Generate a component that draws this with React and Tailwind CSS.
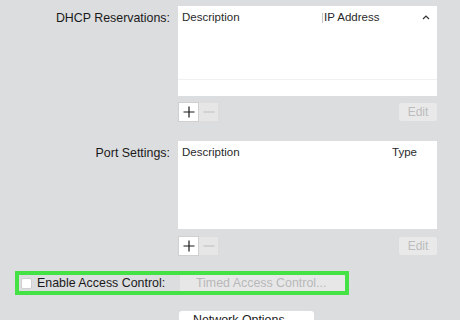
export default function App() {
  const font = { fontFamily: '"Liberation Sans", Arial, sans-serif' };
  const PlusMinus = () => (
    <div className="flex h-[20px]">
      <div className="w-[21px] h-[20px] bg-white border border-[#d0d0d0] flex items-center justify-center">
        <svg width="12" height="12" viewBox="0 0 12 12"><path d="M6 0.5V11.5M0.5 6H11.5" stroke="#1a1a1a" strokeWidth="1.2" /></svg>
      </div>
      <div className="w-[20px] h-[20px] bg-[#e6e6e7] border border-[#dcdcdc] border-l-0 flex items-center justify-center">
        <svg width="12" height="12" viewBox="0 0 12 12"><path d="M0.5 6H11.5" stroke="#c4c4c4" strokeWidth="1.2" /></svg>
      </div>
    </div>
  );
  const Edit = () => (
    <div className="w-[38px] h-[18px] bg-[#e9e9ea] rounded-[2px] text-[12px] text-[#bcbcbc] flex items-center justify-center">Edit</div>
  );
  return (
    <div className="w-[460px] h-[320px] overflow-hidden bg-[#dcdddf] text-[#1a1a1a] relative" style={font}>
      <div className="flex flex-col pt-[6px]">
        {/* DHCP */}
        <div className="flex">
          <div className="w-[170px] text-right text-[12.4px] pt-[4px] leading-[16px]">DHCP Reservations:</div>
          <div className="ml-[8px] w-[259px] h-[90px] bg-white flex flex-col">
            <div className="flex items-center h-[22px] pt-[2px] text-[11.5px] text-[#2a2a2a]">
              <span className="pl-[4px] w-[144px]">Description</span>
              <span className="w-[1px] h-[10px] bg-[#c8c8c8] mr-[1px]"></span>
              <span className="flex-1">IP Address</span>
              <svg width="8" height="6" viewBox="0 0 8 6" className="mr-[7px] mb-[2px]"><path d="M1 5L4 2L7 5" fill="none" stroke="#333" strokeWidth="1.2" /></svg>
            </div>
            <div className="flex-1"></div>
            <div className="h-[1px] bg-[#f0f0f0] mb-[16px]"></div>
          </div>
        </div>
        <div className="flex mt-[6px] pl-[178px] w-[437px] justify-between items-center">
          <PlusMinus />
          <Edit />
        </div>
        {/* Port settings */}
        <div className="flex mt-[19px]">
          <div className="w-[170px] text-right text-[12.4px] pt-[4px] leading-[16px]">Port Settings:</div>
          <div className="ml-[8px] w-[259px] h-[88px] bg-white flex flex-col">
            <div className="flex items-center h-[22px] pt-[2px] text-[11.5px] text-[#2a2a2a]">
              <span className="pl-[4px] w-[214px]">Description</span>
              <span className="flex-1">Type</span>
            </div>
          </div>
        </div>
        <div className="flex mt-[7px] pl-[178px] w-[437px] justify-between items-center">
          <PlusMinus />
          <Edit />
        </div>
        {/* Access control */}
        <div className="mt-[15px] ml-[15px] w-[334px] h-[24px] border-[4px] border-[#45e245] flex items-center">
          <div className="ml-[2px] w-[11px] h-[11px] bg-white border border-[#cfcfcf] rounded-[2px]"></div>
          <div className="ml-[5px] w-[143px] text-[12.4px]">Enable Access Control:</div>
          <div className="flex-1 h-full bg-[#e7e7e8] text-[12.4px] text-[#b8b8b8] pl-[16px] flex items-center">Timed Access Control...</div>
        </div>
        <div className="mt-[16px] ml-[179px] w-[135px] h-[20px] bg-white rounded-[3px] text-[12.4px] pl-[14px] leading-[18px]">Network Options...</div>
      </div>
    </div>
  );
}
